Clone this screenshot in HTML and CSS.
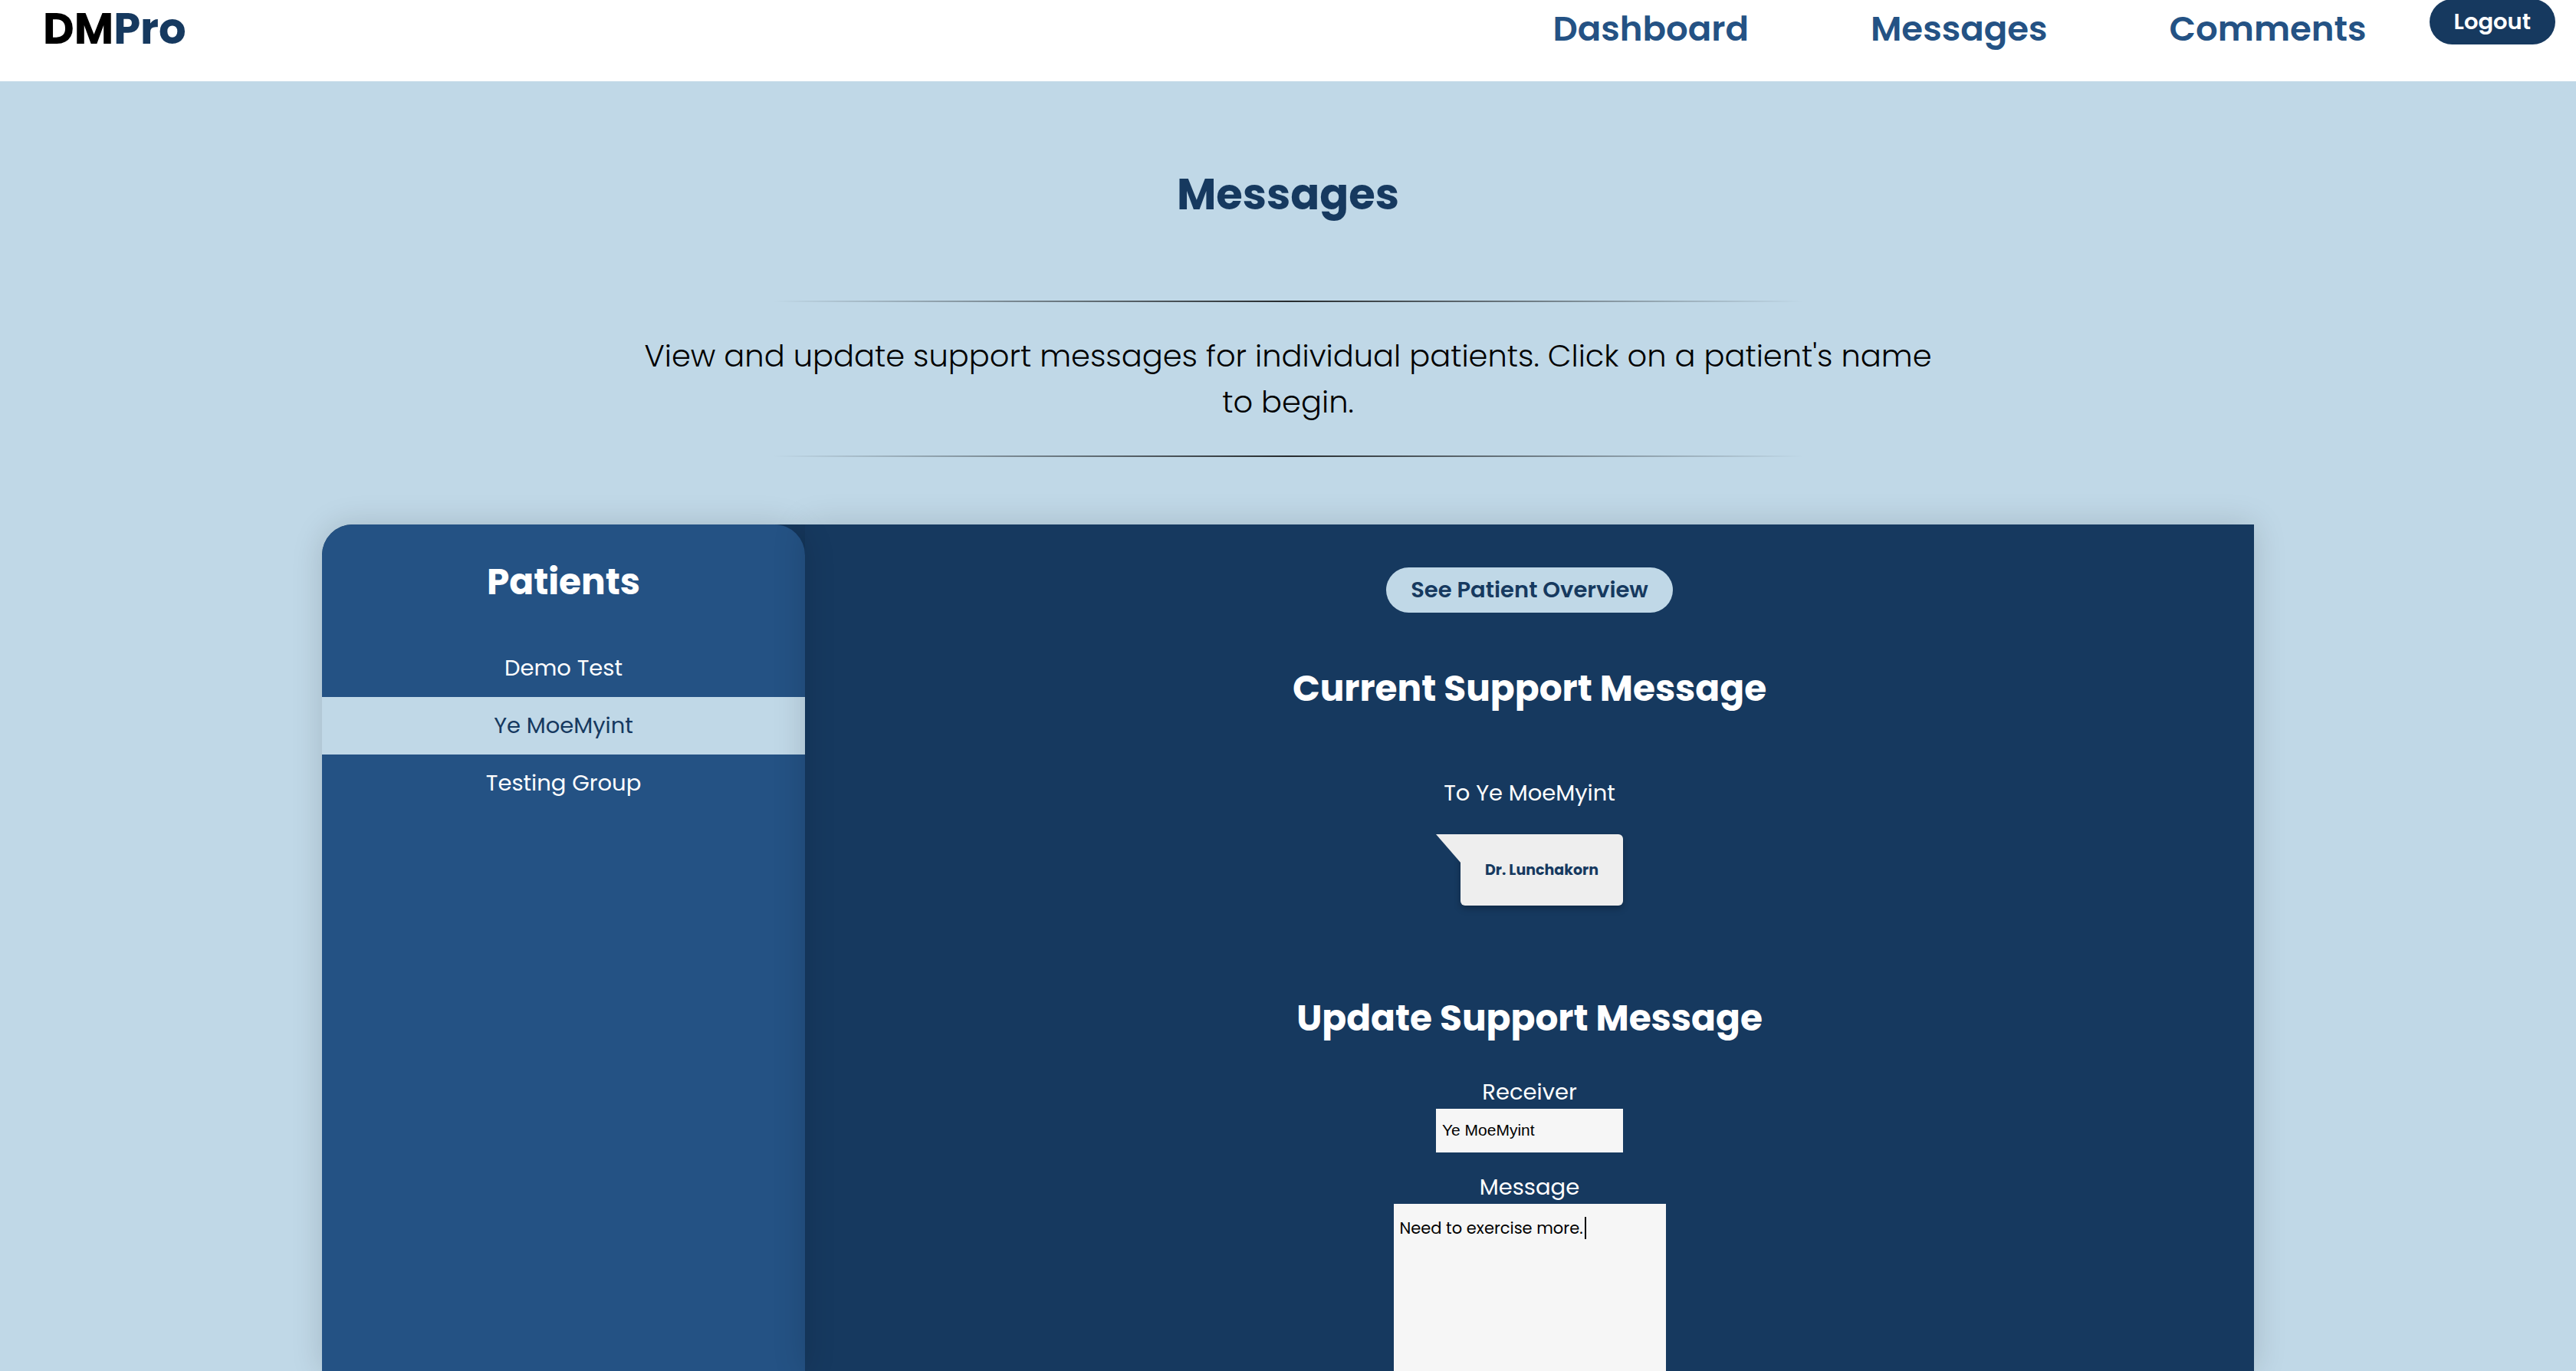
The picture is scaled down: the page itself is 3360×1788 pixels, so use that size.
FILE: index.html
```html
<!DOCTYPE html>
<html lang="en">
<head>
<meta charset="utf-8">
<meta name="viewport" content="width=device-width, initial-scale=1">
<title>DMPro</title>
<link rel="stylesheet" href="styles.css">
</head>
<body>
<header class="topbar">
  <a class="logo" href="#">DM<span class="logo-accent">Pro</span></a>
  <nav class="nav">
    <a class="nav-link" href="#">Dashboard</a>
    <a class="nav-link" href="#">Messages</a>
    <a class="nav-link" href="#">Comments</a>
  </nav>
  <button class="pill pill-dark" type="button">Logout</button>
</header>
<section class="intro">
  <h1 class="title">Messages</h1>
  <hr class="rule">
  <p class="lead">View and update support messages for individual patients. Click on a patient's name to begin.</p>
  <hr class="rule">
</section>
<div class="workspace">
  <aside class="sidebar">
    <h2 class="heading">Patients</h2>
    <ul class="patients">
      <li><a class="patient" href="#">Demo Test</a></li>
      <li><a class="patient patient-active" href="#">Ye MoeMyint</a></li>
      <li><a class="patient" href="#">Testing Group</a></li>
    </ul>
  </aside>
  <main class="content">
    <button class="pill pill-light" type="button">See Patient Overview</button>
    <h2 class="heading current">Current Support Message</h2>
    <p class="recipient">To Ye MoeMyint</p>
    <div class="bubble">Dr. Lunchakorn</div>
    <h2 class="heading">Update Support Message</h2>
    <form class="form">
      <label class="label" for="receiver">Receiver</label>
      <input class="receiver" id="receiver" type="text" value="Ye MoeMyint">
      <label class="label" for="message">Message</label>
      <div class="message-box">
        <textarea class="message" id="message">Need to exercise more.</textarea>
        <span class="caret"></span>
      </div>
    </form>
  </main>
</div>
</body>
</html>
```
FILE: styles.css
```css
:root {
  --navy: #16395f;
  --blue: #245284;
  --sky: #c0d8e7;
  --paper: #f6f6f6;
}

* {
  box-sizing: border-box;
}

body {
  margin: 0;
  min-height: 100vh;
  display: flex;
  flex-direction: column;
  background: var(--sky);
  color: #000;
  font-family: Poppins, Inter, sans-serif;
  font-size: 29px;
  line-height: 44px;
}

h1, h2, p, ul {
  margin: 0;
  padding: 0;
}

a {
  color: inherit;
  text-decoration: none;
}

.topbar {
  display: flex;
  align-items: flex-start;
  height: 106px;
  padding: 0 27px 0 56px;
  background: #fff;
}

.logo {
  margin-right: auto;
  font-size: 56px;
  font-weight: 700;
  line-height: 76px;
}

.logo-accent {
  color: var(--navy);
}

.nav {
  display: flex;
  gap: 159px;
  margin-right: 82px;
}

.nav-link {
  color: var(--blue);
  font-size: 45px;
  font-weight: 600;
  line-height: 76px;
}

.pill {
  border: 0;
  border-radius: 30px;
  height: 59px;
  padding: 0 32px;
  font-family: inherit;
  font-size: 29px;
  font-weight: 600;
}

.pill-dark {
  margin-top: -1px;
  background: var(--navy);
  color: #fff;
}

.pill-light {
  background: var(--sky);
  color: var(--navy);
}

.intro {
  display: flex;
  flex-direction: column;
  align-items: center;
  padding: 105px 0 88px;
  text-align: center;
}

.title {
  margin-bottom: 95px;
  color: var(--navy);
  font-size: 56px;
  font-weight: 700;
  line-height: 86px;
}

.rule {
  width: 40%;
  height: 2px;
  margin: 0;
  border: 0;
  background: linear-gradient(to right, transparent, rgba(0, 0, 0, 0.8), transparent);
}

.lead {
  width: 51%;
  margin: 40px 0;
  font-size: 40px;
  font-weight: 300;
  line-height: 60px;
}

.workspace {
  flex: 1;
  display: flex;
  width: 75%;
  margin: 0 auto;
  border-radius: 40px 0 0 0;
  background: var(--navy);
  color: #fff;
  text-align: center;
}

.sidebar {
  width: 25%;
  padding-top: 39px;
  border-radius: 40px 40px 0 0;
  background: var(--blue);
  box-shadow: 0 0 40px rgba(0, 0, 0, 0.15);
}

.heading {
  font-size: 47px;
  font-weight: 700;
  line-height: 72px;
}

.patients {
  margin-top: 39px;
  list-style: none;
}

.patient {
  display: block;
  line-height: 75px;
}

.patient-active {
  background: var(--sky);
  color: var(--navy);
}

.content {
  flex: 1;
  display: flex;
  flex-direction: column;
  align-items: center;
  padding-top: 56px;
  box-shadow: 0 0 40px rgba(0, 0, 0, 0.15);
}

.current {
  margin: 63px 0 78px;
}

.bubble {
  position: relative;
  margin: 32px 0 111px 32px;
  padding: 0 32px;
  border-radius: 0 6px 6px 6px;
  background: #eee;
  box-shadow: 0 4px 8px rgba(0, 0, 0, 0.25);
  color: var(--navy);
  font-size: 19px;
  font-weight: 700;
  line-height: 93px;
}

.bubble::before {
  content: "";
  position: absolute;
  top: 0;
  left: -32px;
  width: 33px;
  height: 38px;
  background: #eee;
  clip-path: polygon(0 0, 100% 0, 100% 100%);
}

.form {
  flex: 1;
  display: flex;
  flex-direction: column;
  align-items: center;
  margin-top: 38px;
}

.receiver {
  width: 244px;
  height: 57px;
  margin-bottom: 23px;
  padding: 0 8px 2px;
  border: 0;
  background: var(--paper);
  font-family: "Liberation Sans", Arial, sans-serif;
  font-size: 21px;
}

.message-box {
  flex: 1;
  display: flex;
  position: relative;
}

.message {
  width: 355px;
  min-height: 200px;
  padding: 17px 8px;
  border: 0;
  outline: 0;
  resize: none;
  background: var(--paper);
  font-family: inherit;
  font-size: 21px;
  line-height: 30px;
}

.caret {
  position: absolute;
  top: 17px;
  left: 249px;
  width: 2px;
  height: 29px;
  background: #000;
}
```
